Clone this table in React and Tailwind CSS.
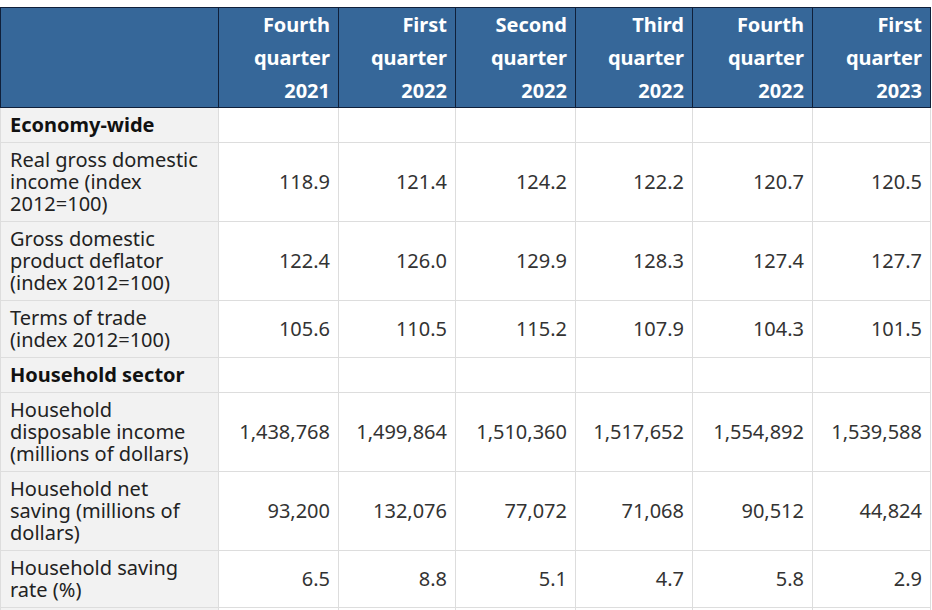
import React from "react";

const headers = [
  ["Fourth", "quarter", "2021"],
  ["First", "quarter", "2022"],
  ["Second", "quarter", "2022"],
  ["Third", "quarter", "2022"],
  ["Fourth", "quarter", "2022"],
  ["First", "quarter", "2023"],
];

const rows = [
  { section: "Economy-wide" },
  { label: ["Real gross domestic", "income (index", "2012=100)"], v: ["118.9", "121.4", "124.2", "122.2", "120.7", "120.5"] },
  { label: ["Gross domestic", "product deflator", "(index 2012=100)"], v: ["122.4", "126.0", "129.9", "128.3", "127.4", "127.7"] },
  { label: ["Terms of trade", "(index 2012=100)"], v: ["105.6", "110.5", "115.2", "107.9", "104.3", "101.5"] },
  { section: "Household sector" },
  { label: ["Household", "disposable income", "(millions of dollars)"], v: ["1,438,768", "1,499,864", "1,510,360", "1,517,652", "1,554,892", "1,539,588"] },
  { label: ["Household net", "saving (millions of", "dollars)"], v: ["93,200", "132,076", "77,072", "71,068", "90,512", "44,824"] },
  { label: ["Household saving", "rate (%)"], v: ["6.5", "8.8", "5.1", "4.7", "5.8", "2.9"] },
];

export default function App() {
  return (
    <div className="w-[932px] h-[610px] overflow-hidden bg-white pt-[7px]" style={{ fontFamily: '"Noto Sans", "Open Sans", sans-serif' }}>
      <table className="table-fixed border-collapse w-[930px] text-[20px] text-[#333333]">
        <colgroup>
          <col className="w-[218px]" />
          <col className="w-[120px]" />
          <col className="w-[117px]" />
          <col className="w-[120px]" />
          <col className="w-[117px]" />
          <col className="w-[120px]" />
          <col className="w-[118px]" />
        </colgroup>
        <thead>
          <tr className="bg-[#366799]">
            <th className="border border-[#10203a] p-0"></th>
            {headers.map((h, i) => (
              <th key={i} className="border border-[#10203a] px-[8px] py-0 text-right font-bold text-white leading-[33px] align-middle">
                {h.map((t, j) => (
                  <div key={j}>{t}</div>
                ))}
              </th>
            ))}
          </tr>
        </thead>
        <tbody>
          {rows.map((r, i) =>
            r.section ? (
              <tr key={i}>
                <td className="border border-[#dddddd] bg-[#f2f2f2] pl-[9px] pr-1 py-[6px] leading-[22px] font-bold text-[#111111]">{r.section}</td>
                {headers.map((_, j) => (
                  <td key={j} className="border border-[#dddddd] py-[6px] leading-[22px]"></td>
                ))}
              </tr>
            ) : (
              <tr key={i}>
                <td className="border border-[#dddddd] bg-[#f2f2f2] pl-[9px] pr-1 py-[6px] leading-[22px] text-[#222222] align-middle whitespace-nowrap">
                  {r.label.map((t, j) => (
                    <div key={j}>{t}</div>
                  ))}
                </td>
                {r.v.map((v, j) => (
                  <td key={j} className="border border-[#dddddd] pr-[8px] pl-1 py-[6px] leading-[22px] text-right align-middle whitespace-nowrap">{v}</td>
                ))}
              </tr>
            )
          )}
          <tr>
            <td className="border border-[#dddddd] bg-[#f2f2f2] h-[40px]"></td>
            {headers.map((_, j) => (
              <td key={j} className="border border-[#dddddd] h-[40px]"></td>
            ))}
          </tr>
        </tbody>
      </table>
    </div>
  );
}
